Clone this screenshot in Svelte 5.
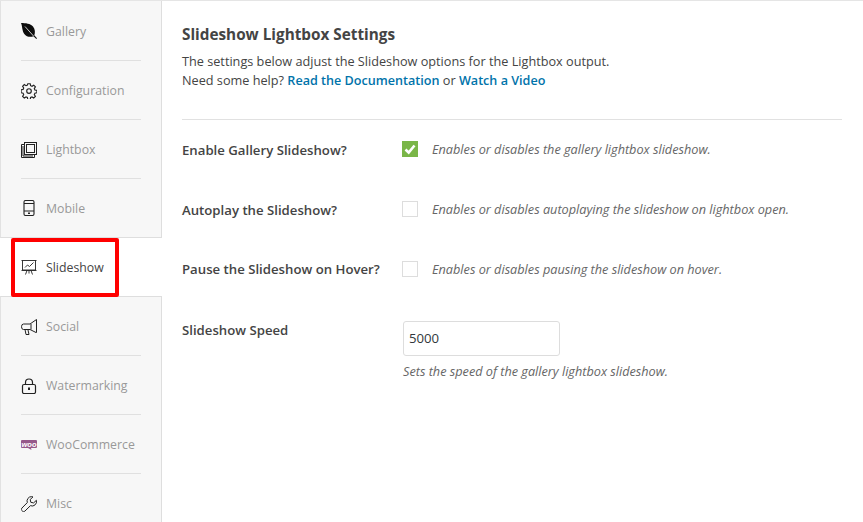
<script>
  const tabs = [
    { id: 'gallery', label: 'Gallery' },
    { id: 'config', label: 'Configuration' },
    { id: 'lightbox', label: 'Lightbox' },
    { id: 'mobile', label: 'Mobile' },
    { id: 'slideshow', label: 'Slideshow', active: true },
    { id: 'social', label: 'Social' },
    { id: 'water', label: 'Watermarking' },
    { id: 'woo', label: 'WooCommerce' },
    { id: 'misc', label: 'Misc' }
  ];
</script>

<div class="page">
  <nav class="side">
    {#each tabs as t}
      <div class="tab {t.id}" class:active={t.active}>
        <span class="ico">
          {#if t.id === 'gallery'}
            <svg viewBox="0 0 16 16" width="16" height="16"><path d="M0 0 C4.500 0 9.500 .5 12 3.500 C14.300 6.300 14.300 9.800 13.300 12.300 L16 15.200 L15.300 16 L12.500 13.200 C9.500 14.500 5.500 14 3.300 11 C1 8 1.500 3.500 0 0Z" fill="#0c0c0c"/><path d="M4 3.500 L12.500 13" stroke="#f7f7f7" stroke-width=".8"/></svg>
          {:else if t.id === 'config'}
            <svg viewBox="0 0 16 16" width="16" height="16" fill="none" stroke="#222" stroke-width="1.150"><path d="M6.800.7h2.400l.4 2 1.400.6 1.700-1.100 1.700 1.700-1.100 1.700.6 1.400 2 .4v2.400l-2 .4-.6 1.400 1.100 1.700-1.700 1.700-1.700-1.100-1.400.6-.4 2H6.800l-.4-2-1.400-.6-1.700 1.100-1.700-1.700 1.100-1.700-.6-1.400-2-.4V6.800l2-.4.6-1.400-1.100-1.700 1.700-1.700 1.700 1.100 1.400-.6z"/><circle cx="8" cy="8" r="2.300"/></svg>
          {:else if t.id === 'lightbox'}
            <svg viewBox="0 0 16 16" width="16" height="16" fill="none" stroke="#222" stroke-width="1"><rect x="3.500" y=".5" width="12" height="12"/><rect x="5.500" y="2.500" width="8" height="8"/><path d="M3.500 2.500 H.5 V15.500 H13.500 V12.500"/><path d="M2 4 V14 H12"/></svg>
          {:else if t.id === 'mobile'}
            <svg viewBox="0 0 16 16" width="16" height="16" fill="none" stroke="#222" stroke-width="1.100"><rect x="3" y=".5" width="10" height="15" rx="1.500"/><path d="M3 3.500h10M3 11h10"/><rect x="7" y="12.500" width="2" height="1.500" fill="#222" stroke="none"/></svg>
          {:else if t.id === 'slideshow'}
            <svg viewBox="0 0 16 16" width="16" height="16" fill="none" stroke="#222" stroke-width=".9"><path d="M.5 1.500h15M1.500 1.500v9.500h13V1.500M.5 11.500h15"/><path d="M4 8.500 6.500 6l2 1.500L12.500 3.500" stroke-width=".9"/><path d="M6 11.500 4.500 15.500M10 11.500l1.500 4M8 11.500v3"/></svg>
          {:else if t.id === 'social'}
            <svg viewBox="0 0 16 16" width="16" height="16" fill="none" stroke="#222" stroke-width="1"><path d="M15.500 .5 V13.500 H15 L9 10.500 H2.500 A2 2.750 0 0 1 2.500 5 H9 Z"/><path d="M10 5V10.500"/><path d="M4 10.500 5 15.500 H8 L7 11"/></svg>
          {:else if t.id === 'water'}
            <svg viewBox="0 0 16 16" width="16" height="16" fill="none" stroke="#222" stroke-width="1.200"><rect x="1.500" y="6.500" width="13" height="9" rx="1.500"/><path d="M4.500 6.500V4.500a3.500 3.500 0 0 1 7 0v2"/><path d="M8 9.500v2.500" stroke-width="2"/></svg>
          {:else if t.id === 'woo'}
            <svg viewBox="0 0 16 10" width="16" height="10"><path d="M1 0h14a1 1 0 0 1 1 1v6a1 1 0 0 1-1 1H10l.5 2L7 8H1a1 1 0 0 1-1-1V1a1 1 0 0 1 1-1z" fill="#96588a"/><text x="8" y="6.800" text-anchor="middle" class="woot">woo</text></svg>
          {:else}
            <svg viewBox="0 0 16 16" width="16" height="16" fill="none" stroke="#222" stroke-width="1"><path d="M10.500.6a4.500 4.500 0 0 0-4.200 6L.8 12.200a1.700 1.700 0 0 0 0 2.300l.7.700a1.700 1.700 0 0 0 2.300 0l5.600-5.500a4.500 4.500 0 0 0 6-5.400l-2.800 2.600-2.800-.6-.6-2.800L12 .9a4.500 4.500 0 0 0-1.500-.3z"/></svg>
          {/if}
        </span>
        <span class="label">{t.label}</span>
      </div>
    {/each}
  </nav>

  <main class="main">
    <h2>Slideshow Lightbox Settings</h2>
    <p class="intro">The settings below adjust the Slideshow options for the Lightbox output.<br />Need some help? <a href="#a">Read the Documentation</a> or <a href="#b">Watch a Video</a></p>
    <hr />
    <div class="row r1 low">
      <div class="name">Enable Gallery Slideshow?</div>
      <div class="val">
        <span class="box on"><svg viewBox="0 0 16 16" width="16" height="16"><path d="M3.500 8.500 6.700 11.500 12.500 4.500" fill="none" stroke="#fff" stroke-width="2.600"/></svg></span>
        <em>Enables or disables the gallery lightbox slideshow.</em>
      </div>
    </div>
    <div class="row r2 low">
      <div class="name">Autoplay the Slideshow?</div>
      <div class="val"><span class="box"></span><em>Enables or disables autoplaying the slideshow on lightbox open.</em></div>
    </div>
    <div class="row r2">
      <div class="name">Pause the Slideshow on Hover?</div>
      <div class="val"><span class="box"></span><em>Enables or disables pausing the slideshow on hover.</em></div>
    </div>
    <div class="row speed">
      <div class="name">Slideshow Speed</div>
      <div class="stack">
        <div class="input">5000</div>
        <em>Sets the speed of the gallery lightbox slideshow.</em>
      </div>
    </div>
  </main>
  <div class="marker"></div>
</div>

<style>
  :global(body) { margin: 0; background: #fff; }
  .page {
    position: relative;
    width: 863px;
    height: 522px;
    overflow: hidden;
    display: flex;
    font-family: "Open Sans", sans-serif;
    font-size: 12.7px;
    color: #444;
    box-sizing: border-box;
    border-top: 1px solid #e5e5e5;
  }
  .side { width: 162px; flex: none; }
  .tab {
    height: 59px;
    box-sizing: border-box;
    background: #f7f7f7;
    border-left: 1px solid #e2e2e2;
    border-right: 1px solid #dedede;
    padding-left: 20px;
    display: flex;
    align-items: center;
    position: relative;
  }
  .tab::after {
    content: "";
    position: absolute;
    left: 20px;
    width: 120px;
    bottom: 0;
    height: 1px;
    background: #e0e0e0;
  }
  .tab.mobile::after, .tab.slideshow::after, .tab.misc::after { display: none; }
  .tab.gallery { height: 60px; }
  .tab.mobile { border-bottom: 1px solid #dedede; }
  .tab.slideshow {
    height: 58px;
    background: #fff;
    border-left: 0;
    border-right: 0;
    padding-left: 21px;
  }
  .tab.social { height: 60px; border-top: 1px solid #dedede; }
  .ico { width: 16px; height: 16px; display: flex; align-items: center; margin-right: 9px; }
  .ico svg { display: block; }
  .woot {
    font-family: "Liberation Sans", sans-serif;
    font-size: 7.500px;
    font-weight: 700;
    font-style: italic;
    fill: #fff;
  }
  .label { color: #999; white-space: nowrap; font-size: 12.300px; }
  .active .label { color: #444; }
  .main { flex: 1; padding: 0 21px 0 20px; min-width: 0; }
  h2 {
    margin: 23px 0 0;
    font-size: 15.300px;
    line-height: 20px;
    font-weight: 700;
    color: #444;
  }
  .intro { margin: 8px 0 0; line-height: 19px; }
  .intro a { color: #0073aa; font-weight: 600; font-size: 12.600px; text-decoration: none; }
  hr { border: 0; height: 1px; background: #e1e1e1; margin: 29px 0 0; }
  .row { display: flex; }
  .name { width: 220px; flex: none; font-weight: 600; font-size: 13.200px; line-height: 20px; }
  .low .name { padding-top: 1px; }
  .val { display: flex; align-items: center; height: 20px; }
  .r1 { margin-top: 19px; }
  .r2 { margin-top: 40px; }
  .low + .r2 { margin-top: 39px; }
  .r1 + .r2 { margin-top: 39px; }
  .box {
    width: 16px; height: 16px; box-sizing: border-box;
    border: 1px solid #ddd; background: #fff; margin-right: 14px; flex: none;
  }
  .box.on { background: #7ab648; border: 0; }
  .box svg { display: block; }
  em { color: #666; font-style: italic; font-size: 12.700px; white-space: nowrap; line-height: 18px; }
  .speed { margin-top: 42px; }
  .speed .name { margin-top: -1px; }
  .stack { margin-left: 1px; }
  .input {
    width: 157px; height: 35px; box-sizing: border-box;
    border: 1px solid #ddd; border-radius: 3px;
    padding-left: 5px; line-height: 33px; font-size: 13.200px; color: #32373c;
    margin-bottom: 7px;
  }
  .stack em { display: block; line-height: 16px; }
  .marker {
    position: absolute;
    left: 11px; top: 237px;
    width: 108px; height: 59px;
    box-sizing: border-box;
    border: 4px solid #f00;
    border-radius: 2px;
  }
</style>
